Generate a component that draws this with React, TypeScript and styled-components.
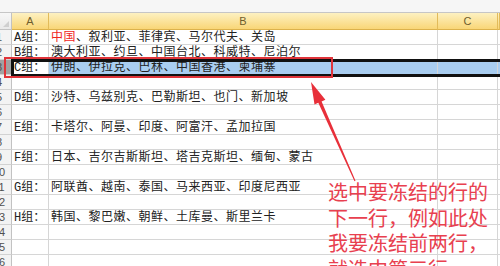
import React from 'react';
import styled, { createGlobalStyle, css } from 'styled-components';

const GlobalStyle = createGlobalStyle`
  html, body {
    margin: 0;
    padding: 0;
    background: #fff;
    overflow: hidden;
  }
`;

const CELL_FONT = `"Liberation Mono", "Noto Sans CJK SC", monospace`;
const COLS = '12px 37px 389px 60px 1fr';

const Sheet = styled.div`
  position: relative;
  width: 500px;
  height: 266px;
  overflow: hidden;
  font-family: ${CELL_FONT};
  background: #fff;
`;

const TopStrip = styled.div`
  height: 12px;
  background: #f6f6f6;
  border-bottom: 1px solid #c6c6c6;
`;

const Row = styled.div<{ $header?: boolean; $selected?: boolean }>`
  position: relative;
  display: grid;
  grid-template-columns: ${COLS};
  height: ${(p) => (p.$header ? '17px' : '15px')};

  ${(p) =>
    p.$selected &&
    css`
      &::after {
        content: '';
        position: absolute;
        left: 11px;
        right: -4px;
        top: -1px;
        bottom: -2px;
        border: 3px solid #111;
        border-right: none;
        z-index: 2;
        pointer-events: none;
      }
    `}
`;

const Corner = styled.div`
  position: relative;
  box-sizing: border-box;
  background: linear-gradient(#f7f7f7, #e9e9e9);
  border-right: 1px solid #c2c2c2;
  border-bottom: 1px solid #c2c2c2;

  &::after {
    content: '';
    position: absolute;
    right: 2px;
    bottom: 2px;
    border-left: 6px solid transparent;
    border-bottom: 6px solid #cfcfcf;
  }
`;

const ColHead = styled.div`
  box-sizing: border-box;
  display: flex;
  align-items: center;
  justify-content: center;
  background: linear-gradient(#fdf1c2, #f9d677);
  border-right: 1px solid #e2bb5a;
  border-bottom: 1px solid #dcb24c;
  font-family: "Liberation Sans", sans-serif;
  font-size: 11px;
  color: #6e5c2c;
`;

const RowHead = styled.div<{ $selected?: boolean }>`
  box-sizing: border-box;
  display: flex;
  justify-content: flex-end;
  align-items: center;
  overflow: hidden;
  background: ${(p) => (p.$selected ? '#a2a2a2' : '#f3f3f3')};
  border-right: 1px solid #c2c2c2;
  border-bottom: 1px solid #d2d2d2;
  font-family: "Liberation Sans", sans-serif;
  font-size: 11px;
  color: #505050;
`;

const RowNum = styled.span`
  flex-shrink: 0;
  width: 24px;
  text-align: center;
`;

const Cell = styled.div<{ $fill?: boolean; $wide?: boolean }>`
  box-sizing: border-box;
  display: flex;
  align-items: center;
  padding: 1px 0 0 2px;
  white-space: nowrap;
  background: ${(p) => (p.$fill ? '#a9cdf0' : '#fff')};
  border-right: 1px solid #d6d6d6;
  border-bottom: 1px solid #d6d6d6;
  font-size: 12px;
  line-height: 12px;
  color: #222;
  letter-spacing: ${(p) => (p.$wide ? '0.5px' : '0')};
`;

const Red = styled.span`
  color: #f0261c;
`;

const Frame = styled.div`
  position: absolute;
  left: 4px;
  top: 57px;
  width: 329px;
  height: 21px;
  box-sizing: border-box;
  border: 2px solid #e0343a;
  z-index: 3;
`;

const Arrow = styled.svg`
  position: absolute;
  left: 0;
  top: 0;
  z-index: 3;
`;

const Note = styled.div`
  position: absolute;
  left: 328px;
  top: 179px;
  z-index: 3;
  font-family: "Noto Sans CJK SC", sans-serif;
  font-size: 20px;
  line-height: 25.5px;
  color: #e8404f;
  white-space: nowrap;
`;

const NoteLine = styled.div``;

type SheetRow = {
  n: number;
  a?: string;
  b?: React.ReactNode;
  selected?: boolean;
};

const rows: SheetRow[] = [
  {
    n: 1,
    a: 'A组：',
    b: (
      <>
        <Red>中国</Red>、叙利亚、菲律宾、马尔代夫、关岛
      </>
    ),
  },
  { n: 2, a: 'B组：', b: '澳大利亚、约旦、中国台北、科威特、尼泊尔' },
  { n: 3, a: 'C组：', b: '伊朗、伊拉克、巴林、中国香港、柬埔寨', selected: true },
  { n: 4 },
  { n: 5, a: 'D组：', b: '沙特、乌兹别克、巴勒斯坦、也门、新加坡' },
  { n: 6 },
  { n: 7, a: 'E组：', b: '卡塔尔、阿曼、印度、阿富汗、孟加拉国' },
  { n: 8 },
  { n: 9, a: 'F组：', b: '日本、吉尔吉斯斯坦、塔吉克斯坦、缅甸、蒙古' },
  { n: 10 },
  { n: 11, a: 'G组：', b: '阿联酋、越南、泰国、马来西亚、印度尼西亚' },
  { n: 12 },
  { n: 13, a: 'H组：', b: '韩国、黎巴嫩、朝鲜、土库曼、斯里兰卡' },
  { n: 14 },
  { n: 15 },
  { n: 16 },
];

// arrow from the note up to the selected row
const tip = { x: 311, y: 82 };
const tail = { x: 355, y: 181 };

const arrowPoints = () => {
  const dx = tail.x - tip.x;
  const dy = tail.y - tip.y;
  const len = Math.hypot(dx, dy);
  const ux = dx / len;
  const uy = dy / len;
  const px = -uy;
  const py = ux;
  const head = 22;
  const bx = tip.x + ux * head;
  const by = tip.y + uy * head;
  const pt = (x: number, y: number) => `${x.toFixed(1)},${y.toFixed(1)}`;
  return [
    pt(tip.x, tip.y),
    pt(bx + px * 6, by + py * 6),
    pt(bx + px * 1.8, by + py * 1.8),
    pt(tail.x + px * 0.6, tail.y + py * 0.6),
    pt(tail.x - px * 0.6, tail.y - py * 0.6),
    pt(bx - px * 1.8, by - py * 1.8),
    pt(bx - px * 6, by - py * 6),
  ].join(' ');
};

export default function App() {
  return (
    <>
      <GlobalStyle />
      <Sheet>
        <TopStrip />
        <Row $header>
          <Corner />
          <ColHead>A</ColHead>
          <ColHead>B</ColHead>
          <ColHead>C</ColHead>
          <ColHead />
        </Row>
        {rows.map((r) => (
          <Row key={r.n} $selected={r.selected}>
            <RowHead $selected={r.selected}>
              <RowNum>{r.n}</RowNum>
            </RowHead>
            <Cell>{r.a}</Cell>
            <Cell $fill={r.selected} $wide>
              {r.b}
            </Cell>
            <Cell $fill={r.selected} />
            <Cell $fill={r.selected} />
          </Row>
        ))}
        <Frame />
        <Arrow width="500" height="266" viewBox="0 0 500 266">
          <polygon points={arrowPoints()} fill="#e8303a" />
        </Arrow>
        <Note>
          <NoteLine>选中要冻结的行的</NoteLine>
          <NoteLine>下一行，例如此处</NoteLine>
          <NoteLine>我要冻结前两行，</NoteLine>
          <NoteLine>就选中第三行</NoteLine>
        </Note>
      </Sheet>
    </>
  );
}
